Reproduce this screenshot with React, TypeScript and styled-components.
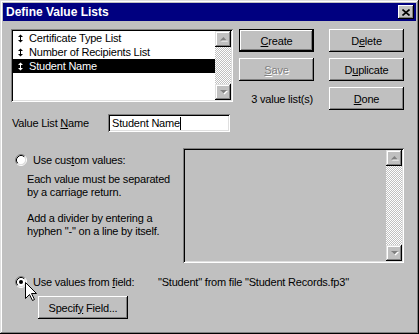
import React from "react";
import styled, { createGlobalStyle, css } from "styled-components";

const GlobalStyle = createGlobalStyle`
  html, body { margin: 0; padding: 0; background: #c0c0c0; }
  body { font-family: "Liberation Sans", Arial, sans-serif; font-size: 11px; letter-spacing: -0.2px; color: #000; }
  * { box-sizing: border-box; }
`;

const raised = css`
  box-shadow: inset -1px -1px #000, inset 1px 1px #fff, inset -2px -2px #808080, inset 2px 2px #c0c0c0;
`;
const sunken = css`
  box-shadow: inset 1px 1px #808080, inset -1px -1px #fff, inset 2px 2px #000, inset -2px -2px #dfdfdf;
`;

const Window = styled.div`
  position: relative;
  width: 419px;
  height: 334px;
  padding: 3px;
  background: #c0c0c0;
  box-shadow: inset -1px -1px #000, inset 1px 1px #dfdfdf, inset -2px -2px #808080, inset 2px 2px #fff;
  display: flex;
  flex-direction: column;
`;

const TitleBar = styled.div`
  height: 18px;
  background: #000080;
  display: flex;
  align-items: center;
  justify-content: space-between;
  padding: 0 2px 0 3px;
`;

const Title = styled.span`
  color: #fff;
  font-weight: bold;
  font-size: 12px;
  letter-spacing: 0;
  white-space: nowrap;
`;

const CloseButton = styled.div`
  width: 16px;
  height: 14px;
  background: #c0c0c0;
  ${raised};
  display: flex;
  align-items: center;
  justify-content: center;
`;

const Content = styled.div`
  padding: 8px 12px 0 8px;
  display: flex;
  flex-direction: column;
`;

const TopRow = styled.div`
  display: flex;
  gap: 6px;
  align-items: flex-start;
`;

const ListBox = styled.div`
  width: 222px;
  height: 73px;
  padding: 2px;
  background: #fff;
  ${sunken};
  display: flex;
`;

const Items = styled.div`
  flex: 1;
  display: flex;
  flex-direction: column;
`;

const Item = styled.div<{ $selected?: boolean }>`
  height: 14px;
  display: flex;
  align-items: center;
  padding-left: 5px;
  gap: 6px;
  white-space: nowrap;
  background: ${(p) => (p.$selected ? "#000" : "transparent")};
  color: ${(p) => (p.$selected ? "#fff" : "#000")};
`;

const ScrollBar = styled.div`
  width: 16px;
  display: flex;
  flex-direction: column;
`;

const ScrollButton = styled.div`
  width: 16px;
  height: 16px;
  flex: none;
  background: #c0c0c0;
  box-shadow: inset -1px -1px #000, inset 1px 1px #dfdfdf, inset -2px -2px #808080, inset 2px 2px #fff;
  display: flex;
  align-items: center;
  justify-content: center;
`;

const Track = styled.div`
  flex: 1;
  background-image: repeating-conic-gradient(#c0c0c0 0 25%, #fff 0 50%);
  background-size: 2px 2px;
`;

const ButtonGrid = styled.div`
  display: grid;
  grid-template-columns: 75px 75px;
  grid-auto-rows: 23px;
  column-gap: 15px;
  row-gap: 6px;
`;

const Button = styled.div<{ $default?: boolean; $disabled?: boolean; $width?: number }>`
  width: ${(p) => (p.$width ? `${p.$width}px` : "auto")};
  height: 23px;
  background: #c0c0c0;
  display: flex;
  align-items: center;
  justify-content: center;
  white-space: nowrap;
  ${(p) =>
    p.$default
      ? css`
          box-shadow: inset 0 0 0 1px #000, inset -2px -2px #000, inset 2px 2px #fff, inset -3px -3px #808080;
        `
      : raised};
  ${(p) =>
    p.$disabled &&
    css`
      color: #808080;
      text-shadow: 1px 1px #fff;
    `}
`;

const CountCell = styled.div`
  display: flex;
  align-items: center;
  justify-content: flex-end;
  padding-right: 1px;
  white-space: nowrap;
`;

const NameRow = styled.div`
  margin-top: 4px;
  display: flex;
  align-items: center;
  padding-left: 1px;
`;

const Label = styled.span`
  width: 96px;
  white-space: nowrap;
`;

const TextField = styled.div`
  width: 122px;
  height: 18px;
  background: #fff;
  ${sunken};
  display: flex;
  align-items: center;
  padding-left: 4px;
  white-space: nowrap;
`;

const Caret = styled.span`
  display: inline-block;
  width: 1px;
  height: 13px;
  background: #000;
`;

const CustomSection = styled.div`
  margin-top: 16px;
  display: flex;
`;

const LeftCol = styled.div`
  width: 172px;
  display: flex;
  flex-direction: column;
`;

const RadioRow = styled.div<{ $top: number }>`
  margin-top: ${(p) => p.$top}px;
  height: 13px;
  display: flex;
  align-items: center;
  padding-left: 4px;
  gap: 6px;
  white-space: nowrap;
`;

const Description = styled.div`
  margin-top: 7px;
  padding-left: 16px;
  line-height: 13px;
  display: flex;
  flex-direction: column;
  gap: 13px;
`;

const ValuesBox = styled.div`
  width: 221px;
  height: 115px;
  padding: 2px;
  background: #c0c0c0;
  ${sunken};
  display: flex;
  justify-content: flex-end;
`;

const FieldLabel = styled.span`
  width: 119px;
`;

const SpecifyRow = styled.div`
  margin-top: 8px;
  padding-left: 27px;
  display: flex;
`;

const Cursor = styled.svg`
  position: absolute;
  left: 25px;
  top: 282px;
`;

const Radio = ({ checked }: { checked?: boolean }) => (
  <svg width="12" height="12" viewBox="0 0 12 12">
    <circle cx="6" cy="6" r="4.5" fill="#fff" />
    <path d="M9.89,2.11 A5.5,5.5 0 0 0 2.11,9.89" stroke="#808080" fill="none" />
    <path d="M2.11,9.89 A5.5,5.5 0 0 0 9.89,2.11" stroke="#fff" fill="none" />
    <path d="M9.18,2.82 A4.5,4.5 0 0 0 2.82,9.18" stroke="#000" fill="none" />
    <path d="M2.82,9.18 A4.5,4.5 0 0 0 9.18,2.82" stroke="#dfdfdf" fill="none" />
    {checked && <circle cx="6" cy="6" r="2" fill="#000" />}
  </svg>
);

const Arrow = ({ down }: { down?: boolean }) => (
  <svg width="9" height="6" viewBox="0 0 9 6">
    {down ? (
      <>
        <polygon points="1,1 8,1 4.5,4.5" fill="#fff" transform="translate(1,1)" />
        <polygon points="1,1 8,1 4.5,4.5" fill="#808080" />
      </>
    ) : (
      <>
        <polygon points="1,4.5 8,4.5 4.5,1" fill="#fff" transform="translate(1,1)" />
        <polygon points="1,4.5 8,4.5 4.5,1" fill="#808080" />
      </>
    )}
  </svg>
);

const Handle = ({ color }: { color: string }) => (
  <svg width="5" height="9" viewBox="0 0 5 9">
    <polygon points="0,3 2.5,0.5 5,3" fill={color} />
    <rect x="2" y="3" width="1" height="3" fill={color} />
    <polygon points="0,6 5,6 2.5,8.5" fill={color} />
  </svg>
);

const VScroll = () => (
  <ScrollBar>
    <ScrollButton>
      <Arrow />
    </ScrollButton>
    <Track />
    <ScrollButton>
      <Arrow down />
    </ScrollButton>
  </ScrollBar>
);

const lists = ["Certificate Type List", "Number of Recipients List", "Student Name"];

export default function App() {
  return (
    <>
      <GlobalStyle />
      <Window>
        <TitleBar>
          <Title>Define Value Lists</Title>
          <CloseButton>
            <svg width="8" height="7" viewBox="0 0 8 7">
              <path d="M0.5,0.5 L7.5,6.5 M7.5,0.5 L0.5,6.5" stroke="#000" strokeWidth="1.6" />
            </svg>
          </CloseButton>
        </TitleBar>
        <Content>
          <TopRow>
            <ListBox>
              <Items>
                {lists.map((l, i) => (
                  <Item key={l} $selected={i === 2}>
                    <Handle color={i === 2 ? "#fff" : "#000"} />
                    {l}
                  </Item>
                ))}
              </Items>
              <VScroll />
            </ListBox>
            <ButtonGrid>
              <Button $default>
                <span><u>C</u>reate</span>
              </Button>
              <Button>
                <span>D<u>e</u>lete</span>
              </Button>
              <Button $disabled>
                <span><u>S</u>ave</span>
              </Button>
              <Button>
                <span>D<u>u</u>plicate</span>
              </Button>
              <CountCell>3 value list(s)</CountCell>
              <Button>
                <span><u>D</u>one</span>
              </Button>
            </ButtonGrid>
          </TopRow>
          <NameRow>
            <Label>
              Value List <u>N</u>ame
            </Label>
            <TextField>
              Student Name
              <Caret />
            </TextField>
          </NameRow>
          <CustomSection>
            <LeftCol>
              <RadioRow $top={5}>
                <Radio />
                <span>
                  Use cus<u>t</u>om values:
                </span>
              </RadioRow>
              <Description>
                <div>
                  Each value must be separated
                  <br />
                  by a carriage return.
                </div>
                <div>
                  Add a divider by entering a
                  <br />
                  hyphen "-" on a line by itself.
                </div>
              </Description>
            </LeftCol>
            <ValuesBox>
              <VScroll />
            </ValuesBox>
          </CustomSection>
          <RadioRow $top={12}>
            <Radio checked />
            <FieldLabel>
              Use values from <u>f</u>ield:
            </FieldLabel>
            <span>"Student" from file "Student Records.fp3"</span>
          </RadioRow>
          <SpecifyRow>
            <Button $width={90}>
              <span>
                Specif<u>y</u> Field...
              </span>
            </Button>
          </SpecifyRow>
        </Content>
        <Cursor width="12" height="20" viewBox="0 0 12 20">
          <polygon
            points="0.5,0.5 0.5,16.5 4.5,12.5 7.5,18.5 9.5,17.5 6.5,11.5 11.5,11.5"
            fill="#fff"
            stroke="#000"
            strokeWidth="1"
          />
        </Cursor>
      </Window>
    </>
  );
}
